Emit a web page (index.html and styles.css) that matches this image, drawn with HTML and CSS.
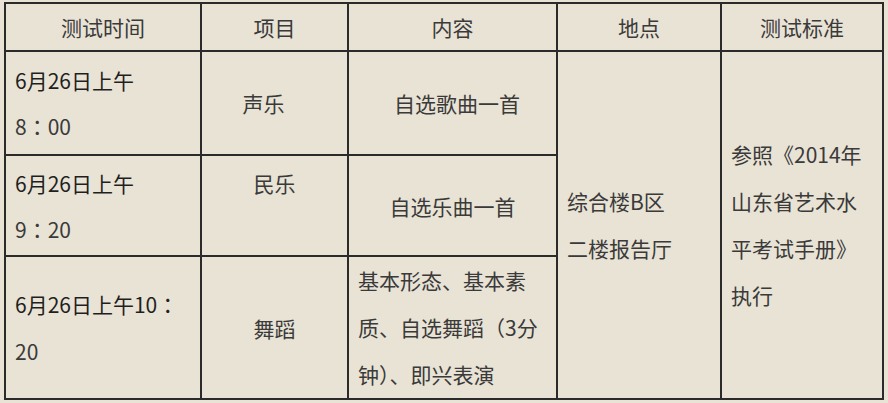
FILE: index.html
```html
<!DOCTYPE html>
<html lang="zh-CN">
<head>
<meta charset="utf-8">
<title>测试安排</title>
<link rel="stylesheet" href="styles.css">
</head>
<body>
<table class="schedule">
  <thead>
    <tr class="row-head">
      <th class="c-time">测试时间</th>
      <th class="c-item">项目</th>
      <th class="c-content">内容</th>
      <th class="c-place">地点</th>
      <th class="c-std">测试标准</th>
    </tr>
  </thead>
  <tbody>
    <tr class="row-a">
      <td class="left"><span class="dark">6月26日上午</span><br>8<span class="punct" lang="zh-Hant">：</span>00</td>
      <td class="center shift-left">声乐</td>
      <td class="center shift-right">自选歌曲一首</td>
      <td class="left tall" rowspan="3">综合楼B区<br>二楼报告厅</td>
      <td class="left tall" rowspan="3">参照《2014年<br>山东省艺术水<br>平考试手册》<br>执行</td>
    </tr>
    <tr class="row-b">
      <td class="left"><span class="dark">6月26日上午</span><br>9<span class="punct" lang="zh-Hant">：</span>20</td>
      <td class="center top">民乐</td>
      <td class="center">自选乐曲一首</td>
    </tr>
    <tr class="row-c">
      <td class="left tall"><span class="dark">6月26日上午10<span class="punct" lang="zh-Hant">：</span></span><br>20</td>
      <td class="center">舞蹈</td>
      <td class="left tall">基本形态、基本素<br>质、自选舞蹈<span class="punct" lang="zh-Hant">（</span>3分<br>钟<span class="punct" lang="zh-Hant">）</span>、即兴表演</td>
    </tr>
  </tbody>
</table>
</body>
</html>
```

FILE: styles.css
```css
html, body {
  margin: 0;
  background: #e9e3d5;
}
body {
  padding: 2px 0 0 4px;
}
.schedule {
  table-layout: fixed;
  width: 880px;
  border-collapse: separate;
  border-spacing: 0;
  border-left: 2px solid #2b2b2b;
  border-top: 2px solid #2b2b2b;
  font-family: "Noto Sans CJK SC", "Microsoft YaHei", sans-serif;
  font-size: 21px;
  line-height: 46px;
  color: #3a3a3a;
  background: #e9e3d5;
}
.schedule th,
.schedule td {
  box-sizing: border-box;
  border-right: 2px solid #2b2b2b;
  border-bottom: 2px solid #2b2b2b;
  padding: 0;
  vertical-align: middle;
  font-weight: normal;
}
.schedule th {
  text-align: center;
}
.c-time { width: 196px; }
.c-item { width: 147px; }
.c-content { width: 209px; }
.c-place { width: 164px; }
.c-std { width: 162px; }

.row-head th { height: 48px; line-height: 44px; }
.row-a td { height: 104px; }
.row-b td { height: 101px; }
.row-c td { height: 142px; }

.left {
  text-align: left;
  padding-left: 9px !important;
}
.center {
  text-align: center;
}
.shift-left {
  padding-right: 22px !important;
}
.shift-right {
  padding-left: 9px !important;
}
.top {
  vertical-align: top !important;
  padding-top: 4px !important;
}
.tall {
  line-height: 47px;
}
.dark {
  color: #1f1f1f;
}
.punct {
  font-family: "Noto Sans CJK TC", "Noto Sans CJK SC", sans-serif;
}
```
